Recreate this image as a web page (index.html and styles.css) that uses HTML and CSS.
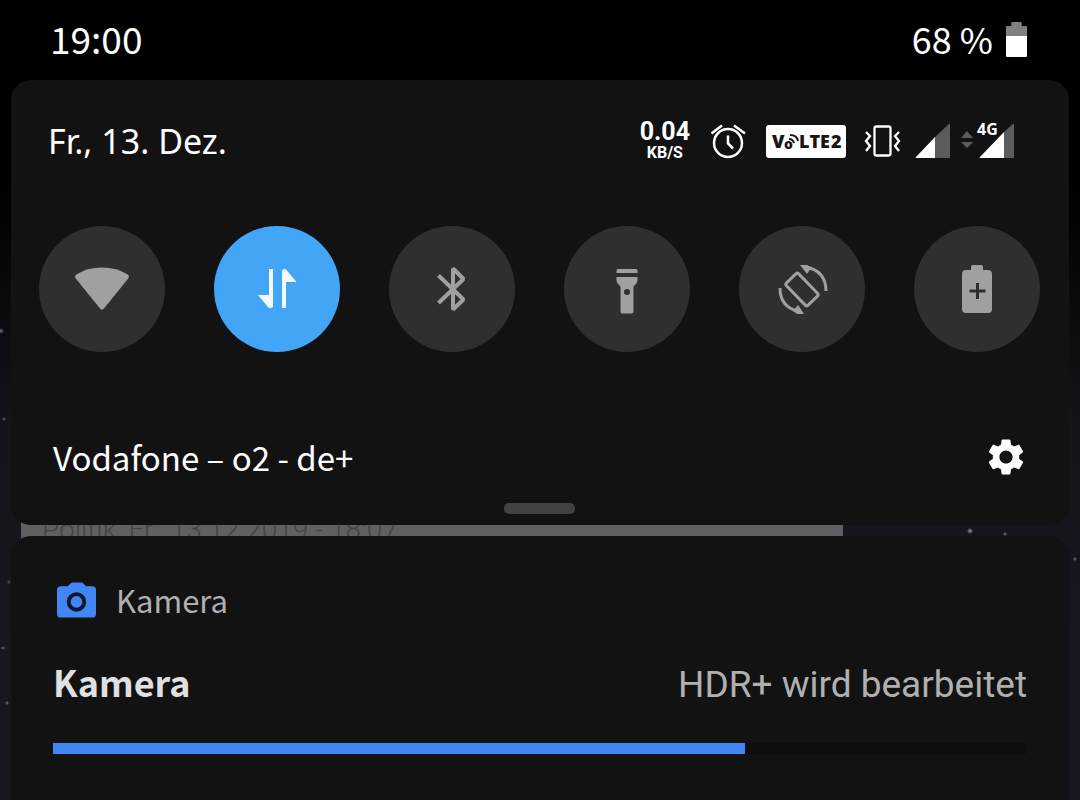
FILE: index.html
```html
<!DOCTYPE html>
<html lang="de">
<head>
<meta charset="utf-8">
<meta name="viewport" content="width=device-width, initial-scale=1">
<title>Schnelleinstellungen</title>
<link rel="stylesheet" href="styles.css">
</head>
<body>
<header class="status-bar">
  <time class="clock">19:00</time>
  <div class="battery">
    <span>68 %</span>
    <svg class="battery-icon" width="21" height="35" viewBox="0 0 20 35" preserveAspectRatio="none" aria-hidden="true">
      <path fill="#808080" d="M5 1q0-1 1-1h8q1 0 1 1v3h4q1 0 1 1v9H0V5q0-1 1-1h4z"/>
      <path fill="#fff" d="M0 14h20v20q0 1-1 1H1q-1 0-1-1z"/>
    </svg>
  </div>
</header>

<main class="shade">
  <section class="panel" aria-label="Schnelleinstellungen">
    <div class="panel-head">
      <time class="date" datetime="2019-12-13">Fr., 13. Dez.</time>
      <div class="indicators">
        <div class="net-speed"><span class="net-value">0.04</span><span class="net-unit">KB/S</span></div>
        <svg width="40" height="40" viewBox="0 0 40 40" fill="none" stroke="#fff" aria-hidden="true">
          <circle cx="20" cy="22" r="14" stroke-width="2.500"/>
          <path stroke-width="2.500" d="M20 14.500v8l5 5M3.500 12.500L14 4.500M37 12.500L26 4.500"/>
        </svg>
        <svg width="80" height="33" viewBox="0 0 80 33" role="img" aria-label="VoLTE 2">
          <rect width="80" height="33" rx="3" fill="#fff"/>
          <g class="volte-text">
            <text x="6" y="23">V</text>
            <text class="volte-small" x="18" y="24">o</text>
            <text x="33" y="23">LTE</text>
            <text x="65" y="23">2</text>
          </g>
          <path fill="none" stroke="#161616" stroke-width="2" d="M23 14q4 0 5 4M24 10q7 0 8 6"/>
        </svg>
        <div class="radio-icons">
          <svg width="39" height="36" viewBox="0 0 39 36" fill="none" stroke="#fff" aria-hidden="true">
            <rect x="10.500" y="3.500" width="16" height="29" rx="2" stroke-width="2.300"/>
            <path stroke-width="2.300" d="M2 9l4 4-4 5 4 5-4 5M35 9l-4 4 4 5-4 5 4 5"/>
          </svg>
          <svg width="35" height="36" viewBox="0 0 35 36" aria-hidden="true">
            <path fill="#5c5c5c" d="M20 14L34 1q1-1 1 0v33q0 1-1 1H20z"/>
            <path fill="#fff" d="M20 14v21H1q-1 0 0-1z"/>
          </svg>
          <svg class="signal-4g" width="52" height="36" viewBox="0 0 52 36" role="img" aria-label="4G">
            <path fill="#5c5c5c" d="M-1 15l6-7 6 7zM-1 19h12l-6 6z"/>
            <path fill="#5c5c5c" d="M42 9L51 1q1-1 1 0v33q0 1-1 1h-9z"/>
            <path fill="#fff" d="M42 9v26H18q-1 0 0-1z"/>
            <text class="net-type" x="15" y="12">4G</text>
          </svg>
        </div>
      </div>
    </div>

    <div class="tiles">
      <button class="tile" type="button" aria-label="WLAN" aria-pressed="false">
        <svg width="56" height="56" viewBox="0 0 56 56" fill="#a0a0a0"><path d="M1.800 17.500q-1.800-2.300.5-4Q13 6.500 28 6.500t25.700 7q2.300 1.700.5 4L30 47.500q-2 2.300-4 0z"/></svg>
      </button>
      <button class="tile tile-on" type="button" aria-label="Mobile Daten" aria-pressed="true">
        <svg width="56" height="56" viewBox="0 0 56 56" fill="#f2fbff"><path d="M20 8h4v37q0 2-2 2h-1q-1 0-2-1L9 34h11zM33 47h4V21h10.500L37.500 9q-1-1-2-1H35q-2 0-2 2z"/></svg>
      </button>
      <button class="tile" type="button" aria-label="Bluetooth" aria-pressed="false">
        <svg width="56" height="56" viewBox="0 0 56 56" fill="none" stroke="#a0a0a0" stroke-width="4"><path stroke-linejoin="bevel" d="M14.500 14.500l25 24L29 48.500v-41L39.500 18l-25 24"/></svg>
      </button>
      <button class="tile" type="button" aria-label="Taschenlampe" aria-pressed="false">
        <svg width="56" height="56" viewBox="0 0 56 56" fill="#a0a0a0"><path d="M19 8h18q1.500 0 1.500 2v2h-21v-2q0-2 1.500-2zM17.500 16h21v3q0 3-4 6.500v25q0 2-2 2h-9q-2 0-2-2v-25q-4-3.500-4-6.500z"/><circle cx="28" cy="31" r="3" fill="#2f2f2f"/></svg>
      </button>
      <button class="tile" type="button" aria-label="Automatisch drehen" aria-pressed="false">
        <svg width="56" height="56" viewBox="0 0 56 56" fill="none" stroke="#a0a0a0" stroke-width="3"><rect x="19.500" y="13" width="17" height="31" rx="2" transform="rotate(-44 28 28.500)"/><path d="M32 6q20 4 20 24M24 50Q6 46 6 27"/><path fill="#a0a0a0" stroke="none" d="M26 4h7l4 3-4 6zM30 53h-7l-4-3 5-6z"/></svg>
      </button>
      <button class="tile" type="button" aria-label="Energiesparmodus" aria-pressed="false">
        <svg width="56" height="56" viewBox="0 0 56 56" fill="#a0a0a0"><path d="M22 6q0-2 2-2h8q2 0 2 2v3h5q4 0 4 4v35q0 4-4 4H17q-4 0-4-4V13q0-4 4-4h5z"/><path fill="none" stroke="#2f2f2f" stroke-width="3" d="M28.500 22v16M20.500 30h16"/></svg>
      </button>
    </div>

    <div class="panel-foot">
      <span class="carrier">Vodafone – o2 - de+</span>
      <button class="settings" type="button" aria-label="Einstellungen">
        <svg width="44" height="44" viewBox="0 0 24 24" fill="#fff"><path d="M19.140 12.940c.04-.3.06-.61.06-.94 0-.32-.02-.64-.07-.94l2.030-1.580c.18-.14.23-.41.12-.61l-1.920-3.320c-.12-.22-.37-.29-.59-.22l-2.390.96c-.5-.38-1.030-.7-1.620-.94l-.36-2.540c-.04-.24-.24-.41-.48-.41h-3.840c-.24 0-.43.17-.47.41l-.36 2.540c-.59.24-1.130.57-1.620.94l-2.390-.96c-.22-.08-.47 0-.59.22L2.740 8.870c-.12.21-.08.47.12.61l2.030 1.580c-.05.3-.09.63-.09.94s.02.64.07.94l-2.030 1.580c-.18.14-.23.41-.12.61l1.920 3.320c.12.22.37.29.59.22l2.390-.96c.5.38 1.030.7 1.620.94l.36 2.540c.05.24.24.41.48.41h3.840c.24 0 .44-.17.47-.41l.36-2.540c.59-.24 1.130-.56 1.620-.94l2.390.96c.22.08.47 0 .59-.22l1.920-3.320c.12-.22.07-.47-.12-.61zM12 15.600c-1.980 0-3.600-1.620-3.600-3.600s1.620-3.600 3.600-3.600 3.600 1.620 3.600 3.600-1.620 3.600-3.600 3.600z"/></svg>
      </button>
    </div>
    <div class="handle"></div>
  </section>

  <div class="peek">Politik, Fr., 13.12.2019 - 18:07</div>

  <article class="card">
    <div class="card-app">
      <svg width="39" height="36" viewBox="0 0 40 36" aria-hidden="true"><path fill="#4285f4" d="M11 4l3-3q1-1 2-1h9q1 0 2 1l3 3h6q4 0 4 4v24q0 4-4 4H4q-4 0-4-4V8q0-4 4-4z"/><circle cx="20" cy="20" r="8" fill="none" stroke="#0d1830" stroke-width="4"/></svg>
      <span>Kamera</span>
    </div>
    <div class="card-line">
      <h2 class="card-title" id="job">Kamera</h2>
      <span class="card-info">HDR+ wird bearbeitet</span>
    </div>
    <progress class="bar" max="100" value="71" aria-labelledby="job"></progress>
  </article>
</main>
</body>
</html>
```
FILE: styles.css
```css
* { box-sizing: border-box; }

body {
  margin: 0;
  min-height: 100vh;
  display: flex;
  flex-direction: column;
  color: #fff;
  font-family: "Noto Sans CJK SC", "Noto Sans", sans-serif;
  background:
    radial-gradient(circle at 1px 331px, #55565a 1px, transparent 3px),
    radial-gradient(circle at 4px 419px, #44454a 1px, transparent 2px),
    radial-gradient(circle at 9px 582px, #44454a 1px, transparent 2px),
    radial-gradient(circle at 3px 648px, #55565a 1px, transparent 2px),
    radial-gradient(circle at 7px 703px, #55565a 1px, transparent 2px),
    radial-gradient(circle at calc(100% - 110px) 531px, #777 1px, transparent 3px),
    radial-gradient(circle at calc(100% - 75px) 534px, #55565a 1px, transparent 2px),
    radial-gradient(circle at calc(100% - 5px) 559px, #55565a 1px, transparent 2px),
    linear-gradient(#000 0, #000 180px, #14151b 430px, #17181f 700px);
}

svg { display: block; flex: none; }

button {
  padding: 0;
  border: 0;
  background: none;
  cursor: pointer;
}

.status-bar {
  height: 80px;
  padding: 0 53px 0 50px;
  display: flex;
  justify-content: space-between;
  font-size: 37px;
  line-height: 76px;
}

.battery {
  display: flex;
  align-items: flex-start;
  gap: 13px;
  font-size: 36px;
}

.battery-icon { margin-top: 22px; }

.shade {
  flex: 1;
  display: flex;
  flex-direction: column;
  padding: 0 11px;
}

.panel,
.card {
  position: relative;
  z-index: 1;
  background: #121212;
}

.panel {
  padding: 36px 29px 11px 28px;
  border-radius: 20px;
}

.panel-head {
  height: 50px;
  padding: 0 26px 0 9px;
  display: flex;
  align-items: center;
  justify-content: space-between;
}

.date {
  font-family: "Noto Sans", sans-serif;
  font-size: 34px;
  line-height: 44px;
}

.carrier {
  font-size: 33px;
  line-height: 44px;
}

.indicators {
  display: flex;
  align-items: center;
  gap: 18px;
}

.net-speed {
  display: flex;
  flex-direction: column;
  align-items: center;
  font-family: Roboto, sans-serif;
  font-weight: 700;
}

.net-value { font-size: 25px; line-height: 24px; }
.net-unit { font-size: 16px; line-height: 18px; }

.volte-text {
  fill: #161616;
  font-family: "Open Sans", sans-serif;
  font-size: 18px;
  font-weight: 800;
}

.volte-small { font-size: 14px; }

.signal-4g { overflow: visible; }

.radio-icons {
  display: flex;
  gap: 12px;
}

.net-type {
  fill: #fff;
  font-family: "Noto Sans", sans-serif;
  font-size: 16px;
  font-weight: 700;
}

.tiles {
  margin-top: 60px;
  display: flex;
  justify-content: space-between;
}

.tile {
  width: 126px;
  height: 126px;
  display: grid;
  place-items: center;
  border-radius: 50%;
  background: #2f2f2f;
}

.tile-on { background: #42a5f5; }

.panel-foot {
  margin-top: 83px;
  padding: 0 12px 0 14px;
  display: flex;
  align-items: center;
  justify-content: space-between;
}

.handle {
  width: 71px;
  height: 11px;
  margin: 24px auto 0;
  border-radius: 5px;
  background: #424242;
}

.peek {
  width: 822px;
  max-width: 78%;
  height: 51px;
  margin: -20px 0 -20px 10px;
  padding-left: 21px;
  overflow: hidden;
  background: #5f6062;
  color: #434446;
  font-family: Roboto, sans-serif;
  font-size: 28px;
  font-weight: 300;
  line-height: 50px;
  white-space: nowrap;
}

.card {
  flex: 1;
  padding: 42px 42px 46px;
  border-radius: 20px 20px 0 0;
}

.card-app {
  padding-left: 4px;
  display: flex;
  align-items: center;
  gap: 20px;
  color: #b0b0b0;
  font-size: 31px;
  line-height: 44px;
}

.card-line {
  margin-top: 33px;
  display: flex;
  align-items: baseline;
  justify-content: space-between;
  line-height: 52px;
}

.card-title {
  margin: 0;
  color: #e0e0e0;
  font-size: 36px;
  font-weight: 700;
}

.card-info {
  color: #b0b0b0;
  font-family: Roboto, sans-serif;
  font-size: 37px;
}

.bar {
  display: block;
  width: 100%;
  height: 11px;
  margin-top: 32px;
  border: 0;
  appearance: none;
  background: #0e0e0e;
}

.bar::-webkit-progress-bar { background: #0e0e0e; }
.bar::-webkit-progress-value { background: #4285f4; }
.bar::-moz-progress-bar { background: #4285f4; }
```
